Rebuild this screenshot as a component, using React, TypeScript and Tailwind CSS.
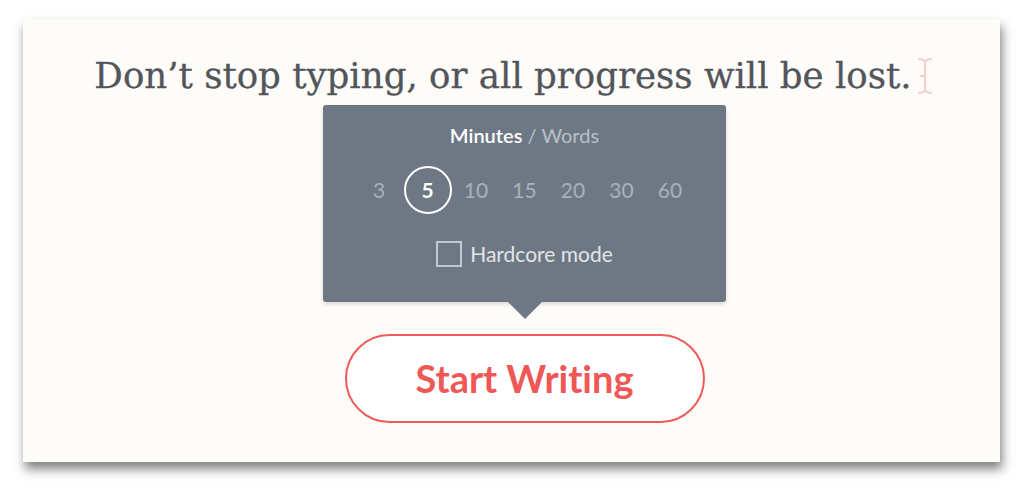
import React from "react";

const durations = [3, 5, 10, 15, 20, 30, 60];

export default function App() {
  return (
    <div className="w-[1024px] h-[489px] bg-white overflow-hidden pl-[23px] pt-[19px]">
      <div className="w-[977px] h-[443px] bg-[#fdfcf8] shadow-[2px_7px_10px_rgba(0,0,0,0.5)] flex flex-col items-center">
        <div className="mt-[32px] ml-[6px] flex items-center">
          <h1 className="text-[35.6px] leading-[50px] text-[#52555b] font-['DejaVu_Serif',serif] [-webkit-text-stroke:0.3px_#52555b]">
            Don’t stop typing, or all progress will be lost.
          </h1>
          <svg width="20" height="38" viewBox="0 0 20 38" className="ml-[3px]">
            <path
              d="M3 2 C7 2 10 3 10 6 L10 32 C10 35 13 36 17 36 M17 2 C13 2 10 3 10 6 M10 32 C10 35 7 36 3 36 M5 19 L10 19"
              fill="none"
              stroke="#f7cdc9"
              strokeWidth="2"
            />
          </svg>
        </div>

        <div className="relative mt-[4px] ml-[26px] w-[403px] h-[197px] bg-[#6e7885] rounded-[3px] shadow-[0_2px_4px_rgba(0,0,0,0.15)] flex flex-col items-center font-['Lato',sans-serif]">
          <div className="mt-[16px] text-[20px] leading-[28px]">
            <span className="text-white font-semibold">Minutes</span>
            <span className="text-[#b9c0c8]"> / Words</span>
          </div>
          <div className="mt-[17px] flex items-center gap-[0.5px]">
            {durations.map((d) => (
              <div
                key={d}
                className={
                  d === 5
                    ? "w-[48px] h-[48px] rounded-full border-2 border-white flex items-center justify-center text-white font-bold text-[21px]"
                    : "w-[48px] h-[48px] flex items-center justify-center text-[#a9b1ba] text-[21px]"
                }
              >
                {d}
              </div>
            ))}
          </div>
          <div className="mt-[27px] flex items-center gap-[8px] text-[21px] leading-[26px] text-[#e2e5e8]">
            <span className="w-[26px] h-[26px] border-2 border-[#c3c8ce]" />
            <span>Hardcore mode</span>
          </div>
          <div className="absolute left-1/2 -translate-x-1/2 top-full w-0 h-0 border-l-[17px] border-r-[17px] border-t-[17px] border-l-transparent border-r-transparent border-t-[#6e7885]" />
        </div>

        <button className="mt-[32px] ml-[26px] w-[360px] h-[89px] rounded-full border-2 border-[#f05a5a] bg-white text-[#f05757] font-['Lato',sans-serif] font-bold text-[38px] [font-variant-ligatures:none]">
          Start Writing
        </button>
      </div>
    </div>
  );
}
